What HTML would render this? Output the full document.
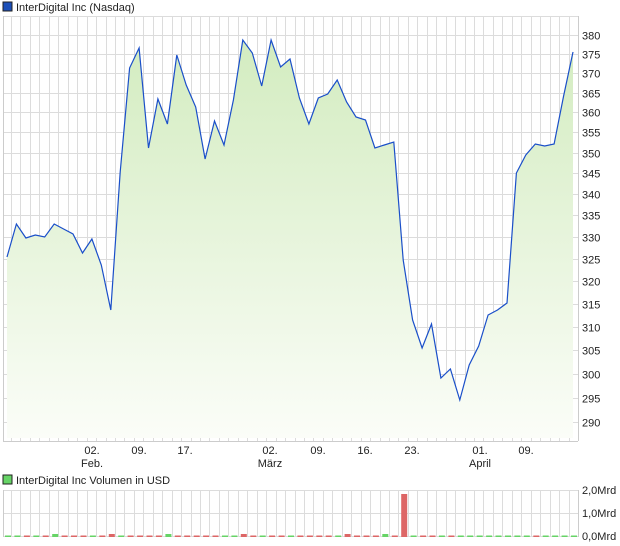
<!DOCTYPE html>
<html><head><meta charset="utf-8"><style>
html,body{margin:0;padding:0;background:#fff;width:620px;height:546px;overflow:hidden}
svg{display:block;font-family:"Liberation Sans",sans-serif}
</style></head><body>
<svg id="s" width="620" height="546" xmlns="http://www.w3.org/2000/svg">
<defs><linearGradient id="g" x1="0" y1="0" x2="0" y2="1"><stop offset="0" stop-color="#d3ecc0"/><stop offset="1" stop-color="#fbfdf8"/></linearGradient></defs>
<rect x="3" y="2" width="9" height="9" fill="#1c4fb8" stroke="#222" stroke-width="1"/>
<text x="16" y="11" font-size="11" fill="#222">InterDigital Inc (Nasdaq)</text>
<rect x="3" y="475" width="9" height="9" fill="#66d466" stroke="#222" stroke-width="1"/>
<text x="16" y="484" font-size="11" fill="#222">InterDigital Inc Volumen in USD</text>
<g id="grid" stroke="#dcdcdc" stroke-width="1"></g>
<path id="area" fill="url(#g)"/>
<path id="line" fill="none" stroke="#1a4fc9" stroke-width="1.2"/>
<g id="vol"></g>
<g id="lbl" font-size="11" fill="#222"></g>
<line x1="3.5" y1="16" x2="3.5" y2="441" stroke="#ccc"/>
<line x1="3" y1="441.5" x2="578" y2="441.5" stroke="#ccc"/>
<line x1="578.5" y1="16" x2="578.5" y2="441" stroke="#ccc"/>
<line x1="3.5" y1="490" x2="3.5" y2="537" stroke="#ccc"/>
<line x1="578.5" y1="490" x2="578.5" y2="537" stroke="#ccc"/>
</svg>
<script>
var NS="http://www.w3.org/2000/svg",s=document.getElementById('s');
function el(p,t,a,txt){var e=document.createElementNS(NS,t);for(var k in a)e.setAttribute(k,a[k]);if(txt)e.textContent=txt;document.getElementById(p).appendChild(e);return e;}
function Y(p){return 35+1432*Math.log(380/p);}
// horizontal grid
el('grid','line',{x1:3,y1:16.5,x2:578,y2:16.5});
for(var p=380;p>=290;p-=5){var y=Math.round(Y(p))+.5;el('grid','line',{x1:3,y1:y,x2:578,y2:y});el('lbl','text',{x:582,y:y+4},String(p));}
for(var x=578;x>3;x-=9.45){var xx=Math.round(x)+.5;el('grid','line',{x1:xx,y1:16,x2:xx,y2:441});el('grid','line',{x1:xx,y1:490,x2:xx,y2:537});}
[490.5,513.5,536.5].forEach(function(y){el('grid','line',{x1:3,y1:y,x2:578,y2:y});});
el('lbl','text',{x:582,y:494},'2,0Mrd');el('lbl','text',{x:582,y:517},'1,0Mrd');el('lbl','text',{x:582,y:540},'0,0Mrd');
[["02.",92],["09.",139],["17.",185],["02.",270],["09.",318],["16.",365],["23.",412],["01.",480],["09.",526]].forEach(function(a){el('lbl','text',{x:a[1],y:454,'text-anchor':'middle'},a[0]);});
el('lbl','text',{x:92,y:467,'text-anchor':'middle'},'Feb.');el('lbl','text',{x:270,y:467,'text-anchor':'middle'},'März');el('lbl','text',{x:480,y:467,'text-anchor':'middle'},'April');
var pts=[257,224,238,235,237,224,229,234,253,239,265,310,172,68,48,148,99,124,55,85,107,159,121,145,100,40,53,86,40,67,59,98,124,98,94,80,102,117,120,148,145,142,260,320,348,324,378,369,400,365,346,315,310,303,173,155,144,146,144,96,52];
var d="",n=pts.length,step=(573-7)/(n-1);
for(var i=0;i<n;i++){d+=(i?"L":"M")+(7+i*step).toFixed(1)+","+pts[i];}
document.getElementById('line').setAttribute('d',d);
document.getElementById('area').setAttribute('d',d+"L573,438L7,438Z");
var red=[0,0,1,0,1,0,1,1,1,0,1,1,0,1,1,1,1,0,1,1,1,1,1,0,0,1,1,0,1,1,0,1,1,1,1,0,1,1,1,1,0,1,1,0,1,1,0,1,0,0,0,0,0,0,0,0,1,0,0,0,0];
for(var i=0;i<n;i++){var x=5+i*step,h=1.5,c=red[i]?'#dd6666':'#66d466';
 if([5,11,17,25,36,40].indexOf(i)>=0)h=3;
 if(i==42){h=43;c='#dd6666';}
 el('vol','rect',{x:x.toFixed(1),y:537-h,width:6,height:h,fill:c});}
</script>
</body></html>
